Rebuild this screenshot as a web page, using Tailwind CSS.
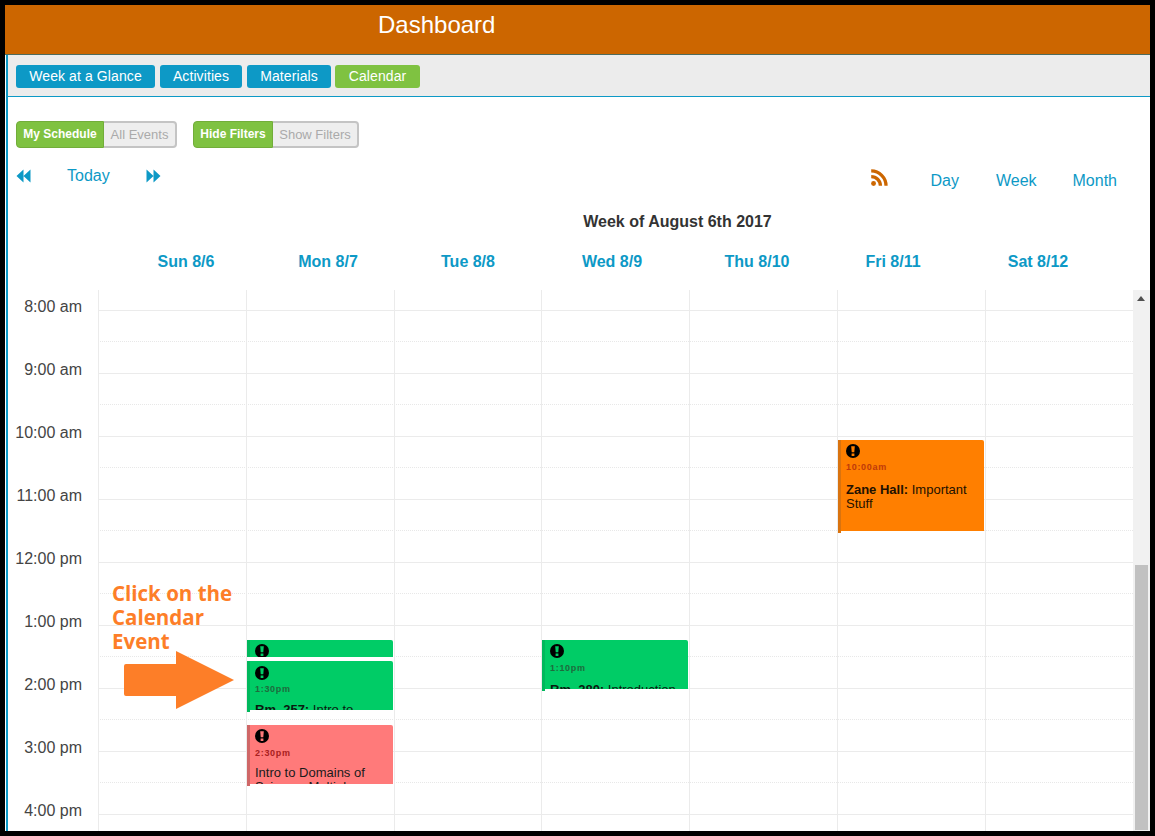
<!DOCTYPE html>
<html lang="en">
<head>
  <meta charset="UTF-8">
  <meta name="viewport" content="width=device-width, initial-scale=1.0">
  <script src="https://cdn.jsdelivr.net/npm/@tailwindcss/browser@4"></script>
  <title>Dashboard</title>
</head>
<body class="bg-black font-['Liberation_Sans',Arial,sans-serif] overflow-hidden">
<div class="relative w-[1155px] h-[836px] p-[5px] bg-black">
  <div class="relative w-[1145px] h-[826px] bg-white overflow-hidden">

    <!-- header -->
    <header class="h-[50px] bg-[#cc6600] border-b border-[#4d6b5c] pl-[373px] pt-[6px]">
      <h1 class="text-[24px] leading-[28px] text-white">Dashboard</h1>
    </header>

    <div class="h-[776px] ml-[1px] border-l-2 border-[#0d99c6] flex flex-col">
      <!-- nav -->
      <nav class="h-[42px] shrink-0 bg-[#ececec] border-b border-[#0d99c6] pl-[8px] pt-[10px] flex text-[14px] tracking-[0.1px] text-white">
        <a class="w-[139px] h-[23px] leading-[22px] text-center rounded-[3px] bg-[#0d99c6]">Week at a Glance</a>
        <a class="w-[82px] h-[23px] ml-[5px] leading-[22px] text-center rounded-[3px] bg-[#0d99c6]">Activities</a>
        <a class="w-[84px] h-[23px] ml-[5px] leading-[22px] text-center rounded-[3px] bg-[#0d99c6]">Materials</a>
        <a class="w-[85px] h-[23px] ml-[4px] leading-[22px] text-center rounded-[3px] bg-[#7fc241]">Calendar</a>
      </nav>

      <!-- toggles -->
      <div class="h-[27px] shrink-0 mt-[24px] pl-[8px] flex gap-[16px] text-[12px] font-bold">
        <div class="flex">
          <span class="w-[88px] leading-[25px] text-center text-white bg-[#7fc241] border border-[#72ad3a] rounded-l-[4px]">My Schedule</span>
          <span class="w-[73px] leading-[23px] text-center text-[13px] font-normal text-[#aaaaaa] bg-[#eeeeee] border-2 border-l-0 border-[#c4c4c4] rounded-r-[4px]">All Events</span>
        </div>
        <div class="flex">
          <span class="w-[80px] leading-[25px] text-center text-white bg-[#7fc241] border border-[#72ad3a] rounded-l-[4px]">Hide Filters</span>
          <span class="w-[86px] leading-[23px] text-center text-[13px] font-normal text-[#aaaaaa] bg-[#eeeeee] border-2 border-l-0 border-[#c4c4c4] rounded-r-[4px]">Show Filters</span>
        </div>
      </div>

      <!-- toolbar -->
      <div class="h-[36px] shrink-0 mt-[13px] pl-[8px] flex text-[16px] text-[#0d99c6]">
        <div class="flex items-start pt-[7px]">
          <svg class="w-[15px] h-[14px] mt-[1px]" viewBox="0 0 15 14" fill="currentColor"><path d="M7.5 0.5V13.5L0.5 7ZM14.5 0.5V13.5L7.5 7Z"/></svg>
          <span class="ml-[36px] -mt-[3px] leading-[22px]">Today</span>
          <svg class="w-[15px] h-[14px] mt-[1px] ml-[36px]" viewBox="0 0 15 14" fill="currentColor"><path d="M0.5 0.5V13.5L7.5 7ZM7.5 0.5V13.5L14.5 7Z"/></svg>
        </div>
        <div class="flex ml-auto mr-[33px] pt-[9px] leading-[22px]">
          <svg class="w-[17px] h-[17px] mr-[42px] -mt-[1px] text-[#cc6600]" viewBox="0 0 16 16" fill="currentColor"><circle cx="2.4" cy="13.6" r="2.3"/><path d="M0.2 5.6v3.1a7.1 7.1 0 0 1 7.1 7.1h3.1A10.2 10.2 0 0 0 0.2 5.6Z"/><path d="M0.2 0.3v3.1a12.4 12.4 0 0 1 12.4 12.4h3.1A15.5 15.5 0 0 0 0.2 0.3Z"/></svg>
          <span>Day</span>
          <span class="ml-[37px]">Week</span>
          <span class="ml-[36px]">Month</span>
        </div>
      </div>

      <div class="h-[20px] shrink-0 mt-[15px] text-center text-[16px] leading-[20px] font-bold text-[#333333] pl-[339px] w-[1000px]">Week of August 6th 2017</div>

      <!-- day headers -->
      <div class="h-[20px] shrink-0 mt-[20px] pl-[107px] flex text-[16px] leading-[20px] font-bold text-[#0d99c6] text-center">
        <span class="w-[142px]">Sun 8/6</span>
        <span class="w-[142px]">Mon 8/7</span>
        <span class="w-[138px]">Tue 8/8</span>
        <span class="w-[150px]">Wed 8/9</span>
        <span class="w-[140px]">Thu 8/10</span>
        <span class="w-[132px]">Fri 8/11</span>
        <span class="w-[158px]">Sat 8/12</span>
      </div>

      <!-- calendar body -->
      <div class="relative mt-[18px] flex-1 flex overflow-hidden">
        <div class="w-[90px] shrink-0 text-[16px] text-[#444444] text-right pr-[16px] leading-[20px] flex flex-col gap-[43px] pt-[7px] whitespace-nowrap">
          <span>8:00 am</span><span>9:00 am</span><span>10:00 am</span><span>11:00 am</span><span>12:00 pm</span><span>1:00 pm</span><span>2:00 pm</span><span>3:00 pm</span><span>4:00 pm</span>
        </div>

        <div class="relative w-[1035px] shrink-0">
          <!-- hour rows -->
          <div class="pt-[20px]">
            <div class="h-[63px] border-t border-[#ebebeb]"><div class="h-[31px] border-b border-dotted border-[#e8e8e8]"></div></div>
            <div class="h-[63px] border-t border-[#ebebeb]"><div class="h-[31px] border-b border-dotted border-[#e8e8e8]"></div></div>
            <div class="h-[63px] border-t border-[#ebebeb]"><div class="h-[31px] border-b border-dotted border-[#e8e8e8]"></div></div>
            <div class="h-[63px] border-t border-[#ebebeb]"><div class="h-[31px] border-b border-dotted border-[#e8e8e8]"></div></div>
            <div class="h-[63px] border-t border-[#ebebeb]"><div class="h-[31px] border-b border-dotted border-[#e8e8e8]"></div></div>
            <div class="h-[63px] border-t border-[#ebebeb]"><div class="h-[31px] border-b border-dotted border-[#e8e8e8]"></div></div>
            <div class="h-[63px] border-t border-[#ebebeb]"><div class="h-[31px] border-b border-dotted border-[#e8e8e8]"></div></div>
            <div class="h-[63px] border-t border-[#ebebeb]"><div class="h-[31px] border-b border-dotted border-[#e8e8e8]"></div></div>
            <div class="h-[20px] border-t border-[#ebebeb]"></div>
          </div>

          <!-- column lines -->
          <div class="absolute inset-0 flex">
            <div class="w-[148px] border-l border-[#ebebeb]"></div>
            <div class="w-[148px] border-l border-[#ebebeb]"></div>
            <div class="w-[147px] border-l border-[#ebebeb]"></div>
            <div class="w-[148px] border-l border-[#ebebeb]"></div>
            <div class="w-[148px] border-l border-[#ebebeb]"></div>
            <div class="w-[148px] border-l border-[#ebebeb]"></div>
            <div class="w-[148px] border-l border-[#ebebeb]"></div>
          </div>

          <!-- events -->
          <div class="absolute left-[149px] top-[350px] w-[146px] h-[17px] overflow-hidden rounded-tr-[2px] bg-[#00cc66] border-l-[3px] border-[#00b85c] pl-[5px] pt-[4px] text-black">
            <svg class="w-[14px] h-[14px]" viewBox="0 0 14 14"><circle cx="7" cy="7" r="7"/><path d="M5.2 2.2h3.6l-.5 6H5.7ZM5.6 9.4h2.8v2.6H5.6Z" fill="#00cc66"/></svg>
          </div>

          <div class="absolute left-[149px] top-[371px] w-[146px] h-[49px] overflow-hidden rounded-tr-[2px] bg-[#00cc66] border-l-[3px] border-[#00b85c] pl-[5px] pt-[5px] text-[13px] leading-[14px] text-[#0a1a10]">
            <svg class="w-[14px] h-[14px]" viewBox="0 0 14 14"><circle cx="7" cy="7" r="7"/><path d="M5.2 2.2h3.6l-.5 6H5.7ZM5.6 9.4h2.8v2.6H5.6Z" fill="#00cc66"/></svg>
            <div class="mt-[2px] text-[9px] leading-[14px] font-bold tracking-[0.7px] text-[#1f6b3d]">1:30pm</div>
            <div class="mt-[7px] whitespace-nowrap"><b class="font-bold">Rm. 257:</b> Intro to</div>
          </div>
          <div class="absolute left-[149px] top-[420px] w-[3px] h-[2px] bg-[#00b85c]"></div>

          <div class="absolute left-[149px] top-[435px] w-[146px] h-[59px] overflow-hidden rounded-tr-[2px] bg-[#ff7a7a] border-l-[3px] border-[#cf6767] pl-[5px] pt-[4px] text-[13px] leading-[14px] text-[#1a1a1a]">
            <svg class="w-[14px] h-[14px]" viewBox="0 0 14 14"><circle cx="7" cy="7" r="7"/><path d="M5.2 2.2h3.6l-.5 6H5.7ZM5.6 9.4h2.8v2.6H5.6Z" fill="#ff7a7a"/></svg>
            <div class="mt-[3px] text-[9px] leading-[14px] font-bold tracking-[0.7px] text-[#a82020]">2:30pm</div>
            <div class="mt-[6px]">Intro to Domains of Science: Multiple</div>
          </div>
          <div class="absolute left-[149px] top-[494px] w-[3px] h-[2px] bg-[#cf6767]"></div>

          <div class="absolute left-[444px] top-[350px] w-[146px] h-[49px] overflow-hidden rounded-tr-[2px] bg-[#00cc66] border-l-[3px] border-[#00b85c] pl-[5px] pt-[4px] text-[13px] leading-[14px] text-[#0a1a10]">
            <svg class="w-[14px] h-[14px]" viewBox="0 0 14 14"><circle cx="7" cy="7" r="7"/><path d="M5.2 2.2h3.6l-.5 6H5.7ZM5.6 9.4h2.8v2.6H5.6Z" fill="#00cc66"/></svg>
            <div class="mt-[3px] text-[9px] leading-[14px] font-bold tracking-[0.7px] text-[#1f6b3d]">1:10pm</div>
            <div class="mt-[8px] whitespace-nowrap"><b class="font-bold">Rm. 280:</b> Introduction</div>
          </div>
          <div class="absolute left-[444px] top-[399px] w-[3px] h-[2px] bg-[#00b85c]"></div>

          <div class="absolute left-[740px] top-[150px] w-[146px] h-[91px] overflow-hidden rounded-tr-[2px] bg-[#ff7f00] border-l-[3px] border-[#d9730f] pl-[5px] pt-[4px] text-[13px] leading-[14px] text-[#221100]">
            <svg class="w-[14px] h-[14px]" viewBox="0 0 14 14"><circle cx="7" cy="7" r="7"/><path d="M5.2 2.2h3.6l-.5 6H5.7ZM5.6 9.4h2.8v2.6H5.6Z" fill="#ff7f00"/></svg>
            <div class="mt-[2px] text-[9px] leading-[14px] font-bold tracking-[0.7px] text-[#c03a0a]">10:00am</div>
            <div class="mt-[9px] pr-[6px]"><b class="font-bold">Zane Hall:</b> Important Stuff</div>
          </div>
          <div class="absolute left-[740px] top-[241px] w-[3px] h-[2px] bg-[#d9730f]"></div>
        </div>

        <!-- scrollbar -->
        <div class="relative w-[17px] shrink-0 bg-[#f1f1f1]">
          <svg class="absolute left-[4px] top-[6px] w-[8px] h-[5px] text-[#505050]" viewBox="0 0 8 5" fill="currentColor"><path d="M4 0 8 5H0Z"/></svg>
          <div class="absolute left-[2px] right-[2px] top-[275px] bottom-[1px] bg-[#c1c1c1]"></div>
        </div>
      </div>
    </div>

    <!-- annotation over the calendar -->
    <div class="absolute left-[107px] top-[576px] w-[140px] text-[20.5px] leading-[24px] font-['Open_Sans',sans-serif] font-bold text-[#fd7e28]">Click on the Calendar Event</div>
    <svg class="absolute left-[119px] top-[646px] w-[110px] h-[60px]" viewBox="0 0 110 60" fill="#fd7e28"><path d="M2 13H52V0L110 29 52 58V45H2Q0 45 0 43V15Q0 13 2 13Z"/></svg>
  </div>
</div>
</body>
</html>
